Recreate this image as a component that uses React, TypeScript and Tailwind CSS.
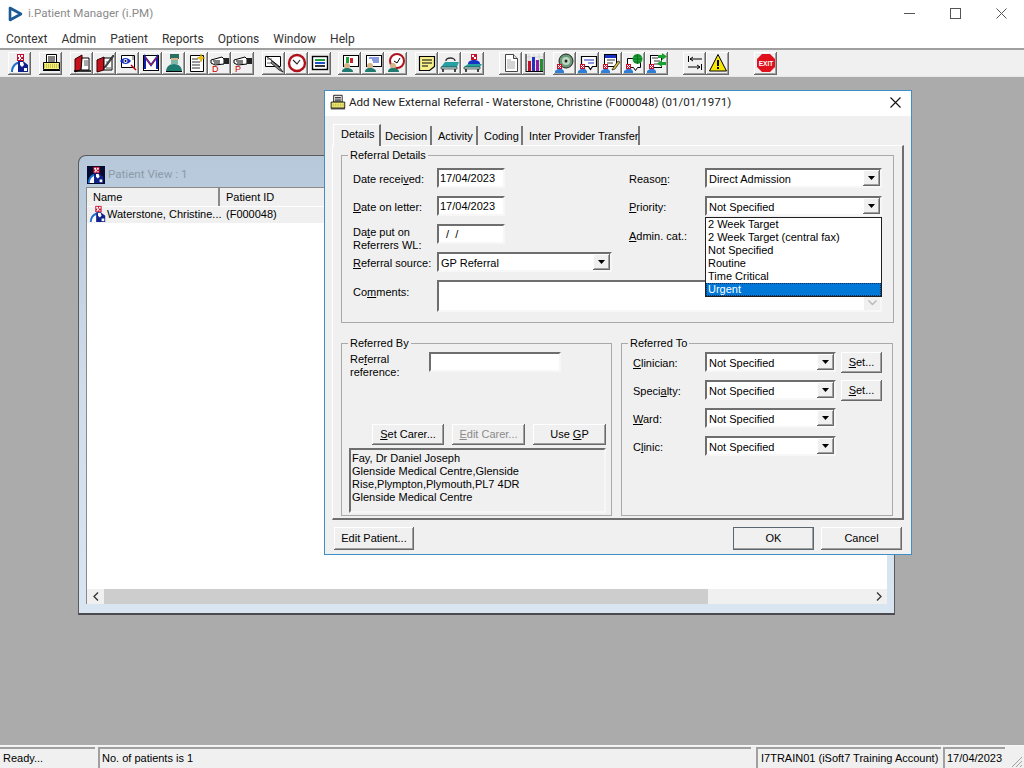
import React from "react";

const ui = "font-['Liberation_Sans',Arial,sans-serif] text-[11px] text-black";
const seg = "font-['Roboto',sans-serif] text-[11.6px]";
const menu = "font-['Roboto',sans-serif] text-[12px]";
const raised = "bg-[#f0f0f0] shadow-[inset_-1px_-1px_0_#696969,inset_1px_1px_0_#ffffff,inset_-2px_-2px_0_#a0a0a0]";
const sunken = "border-2 border-t-[#6e6e6e] border-l-[#6e6e6e] border-b-[#f7f7f7] border-r-[#f7f7f7]";

function Overlay() {
  return (
    <g>
      <rect x="2" y="11" width="5" height="5" fill="#c8102e" />
      <rect x="3" y="12" width="1" height="1" fill="#fff" />
      <rect x="5" y="12" width="1" height="1" fill="#fff" />
      <rect x="4" y="13" width="1" height="1" fill="#fff" />
      <rect x="3" y="14" width="1" height="1" fill="#fff" />
      <rect x="5" y="14" width="1" height="1" fill="#fff" />
      <path d="M0 20v-2l3-2h4l2 2v2z" fill="#2f7fd6" />
    </g>
  );
}

function DoctorPaths() {
  return (
    <g>
      <rect x="7" y="1" width="7" height="7" fill="#c8102e" />
      <rect x="8" y="2" width="2" height="2" fill="#fff" />
      <rect x="11" y="2" width="2" height="2" fill="#fff" />
      <rect x="9" y="4" width="2" height="2" fill="#fff" />
      <rect x="8" y="6" width="2" height="1" fill="#fff" />
      <rect x="11" y="6" width="2" height="1" fill="#fff" />
      <path d="M1 19c0-5 2-8 6-10h1v10z" fill="#1e6fd0" />
      <path d="M3 19c0-4 2-7 5-8v8z" fill="#fff" />
      <path d="M8 8h5l5 4v7H8z" fill="#10228a" />
      <path d="M10 9h3l1 3-2 2-2-2z" fill="#fff" />
      <rect x="14" y="15" width="3" height="3" fill="#fff" />
    </g>
  );
}

const icons: Record<string, React.ReactNode> = {
  doctor: <DoctorPaths />,
  printer: (
    <g>
      <path d="M5.5 1.5h10v8h-10z" fill="#fff" stroke="#000" />
      <path d="M7 4h7M7 6h7M7 8h7" stroke="#000" />
      <path d="M2.5 9.5h16v7h-16z" fill="#f4ee7a" stroke="#000" />
      <path d="M3 12h15M3 14h15" stroke="#9a9420" strokeDasharray="1 1" />
      <path d="M2 17.5h17" stroke="#000" />
    </g>
  ),
  redbook: (
    <g>
      <path d="M3 6l7-4v14l-7 3z" fill="#c8101c" stroke="#300" />
      <path d="M10 5h7v12H9z" fill="#fff" stroke="#000" />
      <path d="M12 8h4M12 10h4M12 12h4" stroke="#555" />
      <path d="M2 18h17" stroke="#000" strokeWidth="1.5" />
    </g>
  ),
  bookpen: (
    <g>
      <path d="M2 7l7-3v13l-7 2z" fill="#c8101c" stroke="#300" />
      <path d="M9 5h8v12H9z" fill="#fff" stroke="#000" />
      <path d="M10 13L18 2l1 1-8 11-2 1z" fill="#555" stroke="#000" strokeWidth=".6" />
      <path d="M11 9h3M11 15h5" stroke="#555" />
    </g>
  ),
  eyedoc: (
    <g>
      <path d="M3.5 2.5h13v12h-13z" fill="#fff" stroke="#000" />
      <path d="M2 8c3-4 8-4 11 0-3 4-8 4-11 0z" fill="#1532c4" />
      <circle cx="7.5" cy="8" r="2" fill="#fff" />
      <circle cx="7.5" cy="8" r="1" fill="#000" />
      <path d="M13 12l5 5" stroke="#c00" strokeWidth="1.5" />
      <path d="M14 4h2M14 6h2" stroke="#555" />
    </g>
  ),
  mail: (
    <g>
      <rect x="2.5" y="2.5" width="15" height="15" fill="#fff" stroke="#000" />
      <path d="M4 16V4l6 8 6-8v12" fill="none" stroke="#1222b0" strokeWidth="2" />
      <path d="M4 4l6 8 6-8" fill="none" stroke="#d0102a" />
    </g>
  ),
  surgeon: (
    <g>
      <rect x="6" y="1" width="9" height="5" fill="#2b6f62" />
      <rect x="7" y="5" width="7" height="4" fill="#d8b48a" />
      <rect x="7" y="7" width="7" height="4" fill="#7fb8a8" />
      <path d="M2 19c0-5 3-8 8-8s8 3 8 8z" fill="#1f7a70" />
      <rect x="2" y="18" width="16" height="1" fill="#000" />
    </g>
  ),
  star: (
    <g>
      <path d="M3.5 2.5h13v16h-13z" fill="#fff" stroke="#000" />
      <path d="M5 6h6M5 9h8M5 12h8M5 15h8" stroke="#333" />
      <path d="M14 1l1 3 3 1-3 1-1 3-1-3-3-1 3-1z" fill="#f5c400" stroke="#b88f00" strokeWidth=".5" />
    </g>
  ),
  camD: (
    <g>
      <path d="M1 7l11-3 2 2v5l-9 1-4-2z" fill="#fff" stroke="#000" />
      <rect x="14" y="5" width="5" height="6" fill="#222" />
      <path d="M3 8h7M4 10h6" stroke="#000" />
    </g>
  ),
  pencilDoc: (
    <g>
      <path d="M1.5 3.5h15v10h-15z" fill="#fff" stroke="#000" />
      <path d="M2 3l14 11" stroke="#000" />
      <path d="M8 8l8 7 3 4-4-2-8-7z" fill="#888" stroke="#000" strokeWidth=".7" />
      <path d="M3 6h5M3 10h4" stroke="#666" />
    </g>
  ),
  clock: (
    <g>
      <circle cx="10" cy="10" r="8" fill="#fff" stroke="#b0121c" strokeWidth="2.4" />
      <path d="M6 7l4 4 3-4" fill="none" stroke="#222" strokeWidth="1.1" />
    </g>
  ),
  list: (
    <g>
      <rect x="2.5" y="3.5" width="15" height="13" fill="#fff" stroke="#000" strokeWidth="1.4" />
      <rect x="5" y="6" width="10" height="2" fill="#20a040" />
      <rect x="5" y="9" width="10" height="2" fill="#2050d0" />
      <rect x="5" y="12" width="10" height="2" fill="#333" />
    </g>
  ),
  screenA: (
    <g>
      <rect x="3.5" y="2.5" width="15" height="11" fill="#fff" stroke="#000" />
      <rect x="6" y="4" width="3" height="6" fill="#20a040" />
      <rect x="10" y="5" width="3" height="5" fill="#d02030" />
      <circle cx="7" cy="13" r="3" fill="#d8b48a" />
      <path d="M2 19c0-3 2-4 5-4s6 1 6 4z" fill="#1f7a70" />
    </g>
  ),
  screenB: (
    <g>
      <rect x="3.5" y="2.5" width="15" height="11" fill="#fff" stroke="#000" />
      <path d="M6 5h10M9 7h7M10 9h6" stroke="#1532c4" />
      <circle cx="7" cy="13" r="3" fill="#d8b48a" />
      <path d="M2 19c0-3 2-4 5-4s6 1 6 4z" fill="#1f7a70" />
    </g>
  ),
  screenC: (
    <g>
      <circle cx="11" cy="8" r="7" fill="#fff" stroke="#b0121c" strokeWidth="2" />
      <path d="M8 8l3 2 3-5" fill="none" stroke="#000" />
      <circle cx="7" cy="13" r="3" fill="#d8b48a" />
      <path d="M2 19c0-3 2-4 5-4s6 1 6 4z" fill="#1f7a70" />
    </g>
  ),
  note: (
    <g>
      <path d="M2.5 3.5h15v10l-5 4h-10z" fill="#f7f08a" stroke="#000" strokeWidth="1.2" />
      <path d="M5 7h10M5 10h10M5 13h6" stroke="#000" />
    </g>
  ),
  bed: (
    <g>
      <path d="M6 8c0-4 9-4 9 0" fill="none" stroke="#333" strokeWidth="1.4" />
      <path d="M1 14l4-5h14l-2 5z" fill="#26a0a0" />
      <path d="M1 14h16v2H1z" fill="#b8dcdc" stroke="#222" strokeWidth=".6" />
      <path d="M3 16v3M15 16v3" stroke="#000" strokeWidth="1.4" />
    </g>
  ),
  bedPerson: (
    <g>
      <rect x="8" y="1" width="6" height="6" fill="#c8102e" />
      <rect x="9" y="2" width="2" height="2" fill="#fff" />
      <rect x="11" y="4" width="2" height="2" fill="#fff" />
      <path d="M5 11c0-3 3-4 6-4s6 1 6 4z" fill="#1532c4" />
      <path d="M1 14l4-3h14l-2 3z" fill="#26a0a0" />
      <path d="M1 14h16v2H1z" fill="#b8dcdc" stroke="#222" strokeWidth=".6" />
      <path d="M3 16v3M15 16v3" stroke="#000" strokeWidth="1.4" />
    </g>
  ),
  page: (
    <g>
      <path d="M4.5 1.5h8l4 4v13h-12z" fill="#fff" stroke="#444" />
      <path d="M12.5 1.5v4h4" fill="#ddd" stroke="#444" />
      <path d="M6 7h4M6 9h8M6 11h8M6 13h8M6 15h8" stroke="#aaa" />
    </g>
  ),
  chart: (
    <g>
      <path d="M2 4h17M2 8h17M2 12h17M2 16h17M5 1v18M10 1v18M15 1v18" stroke="#c8c8c8" strokeWidth=".7" />
      <rect x="4" y="8" width="3" height="10" fill="#c01030" />
      <rect x="8" y="4" width="3" height="14" fill="#2030c0" />
      <rect x="12" y="7" width="3" height="11" fill="#9020a0" />
      <rect x="16" y="6" width="3" height="12" fill="#209030" />
      <path d="M2 18.5h17M2 1v18" stroke="#000" />
    </g>
  ),
  disc: (
    <g>
      <circle cx="11" cy="8" r="7" fill="#6a9a78" stroke="#222" />
      <circle cx="11" cy="8" r="4" fill="#bcd8c0" />
      <circle cx="11" cy="8" r="1.5" fill="#222" />
      <Overlay />
    </g>
  ),
  formA: (
    <g>
      <path d="M3.5 3.5h15v10l-4 0-2 3-2-3h-7z" fill="#fff" stroke="#000" strokeWidth="1.2" />
      <path d="M6 7h10M10 10h6" stroke="#1532c4" />
      <Overlay />
    </g>
  ),
  formB: (
    <g>
      <rect x="3.5" y="1.5" width="12" height="12" fill="#fff" stroke="#000" />
      <rect x="4" y="2" width="11" height="3" fill="#1532c4" />
      <path d="M6 7h8M6 10h6" stroke="#333" />
      <path d="M11 17l3-1 5-7-2-1-5 7z" fill="#d8c040" stroke="#000" strokeWidth=".6" />
      <Overlay />
    </g>
  ),
  formGlobe: (
    <g>
      <path d="M3.5 5.5h13v9h-3l-2 3-2-3h-6z" fill="#fff" stroke="#000" />
      <circle cx="13.5" cy="6" r="5" fill="#18a030" />
      <path d="M9 6h9M13.5 1v10M10 3h7M10 9h7" stroke="#0a5a18" strokeWidth=".6" />
      <Overlay />
    </g>
  ),
  formArrows: (
    <g>
      <rect x="3.5" y="2.5" width="11" height="12" fill="#fff" stroke="#000" />
      <path d="M5 5h6M7 8h6M7 11h6" stroke="#333" />
      <path d="M11 2h4V0l5 3.5L15 7V5h-4z" fill="#18a030" />
      <path d="M19 9h-4V7l-5 3.5 5 3.5v-2h4z" fill="#18a030" />
      <Overlay />
    </g>
  ),
  swap: (
    <g>
      <path d="M3.5 3v6M5 6h12M5 6l3-2M5 6l3 2" fill="none" stroke="#000" />
      <path d="M16.5 11v6M3 14h12M15 14l-3-2M15 14l-3 2" fill="none" stroke="#000" />
    </g>
  ),
  warn: (
    <g>
      <path d="M10 1.5l8.5 16.5h-17z" fill="#f7e600" stroke="#000" />
      <rect x="9" y="7" width="2" height="6" fill="#000" />
      <rect x="9" y="14" width="2" height="2" fill="#000" />
    </g>
  ),
};

function Cam({ letter }: { letter: string }) {
  return (
    <svg width="20" height="20" viewBox="0 0 20 20">
      {icons.camD}
      <text x="2" y="19" fontSize="9" fill="#c00" fontFamily="Liberation Sans">{letter}</text>
    </svg>
  );
}

function Ico({ n, size = 20 }: { n: string; size?: number }) {
  return (
    <svg width={size} height={size} viewBox="0 0 20 20" className="shrink-0">
      {icons[n]}
    </svg>
  );
}

function Tool({ children }: { children: React.ReactNode }) {
  return (
    <div className={`${raised} w-[23px] h-[23px] flex items-center justify-center`}>
      {children}
    </div>
  );
}

const groups: [string[], string][] = [
  [["doctor"], ""],
  [["printer"], "ml-[8px]"],
  [["redbook", "bookpen", "eyedoc", "mail", "surgeon", "star", "camD", "camP"], "ml-[8px]"],
  [["pencilDoc", "clock", "list"], "ml-[8px]"],
  [["screenA", "screenB", "screenC"], "ml-[7px]"],
  [["note", "bed", "bedPerson"], "ml-[8px]"],
  [["page", "chart"], "ml-[15px]"],
  [["disc", "formA", "formB", "formGlobe", "formArrows"], "ml-[8px]"],
  [["swap", "warn"], "ml-[15px]"],
];

function Toolbar() {
  return (
    <div className="h-[29px] bg-[#f0f0f0] border-t-2 border-t-[#a0a0a0] border-b border-b-[#e8e8e8] flex items-center pl-[8px] shrink-0">
      {groups.map(([items, ml], i) => (
        <div key={i} className={`flex ${ml}`}>
          {items.map((n) => (
            <Tool key={n}>
              {n === "camD" ? <Cam letter="D" /> : n === "camP" ? <Cam letter="P" /> : <Ico n={n} />}
            </Tool>
          ))}
        </div>
      ))}
      <div className="ml-[25px]">
        <Tool>
          <svg width="20" height="20" viewBox="0 0 20 20">
            <path d="M6 1h8l5 5v8l-5 5H6l-5-5V6z" fill="#e0101c" />
            <text x="10" y="12.5" textAnchor="middle" fontSize="6.5" fontWeight="700" fill="#fff" fontFamily="Liberation Sans">EXIT</text>
          </svg>
        </Tool>
      </div>
    </div>
  );
}

function Arrow() {
  return (
    <svg width="7" height="4" viewBox="0 0 7 4"><path d="M0 0h7L3.5 4z" fill="#000" /></svg>
  );
}

function Combo({ value, w = "w-[177px]", children }: { value: string; w?: string; children?: React.ReactNode }) {
  return (
    <div className={`relative ${w} h-[20px] bg-white ${sunken} flex items-center justify-between pl-[2px]`}>
      <span className="relative top-[1px] leading-none whitespace-nowrap">{value}</span>
      <div className={`${raised} w-[17px] h-[16px] flex items-center justify-center`}>
        <Arrow />
      </div>
      {children}
    </div>
  );
}

function Input({ value, w }: { value: string; w: string }) {
  return (
    <div className={`${w} h-[20px] bg-white ${sunken} flex items-center pl-[1px] whitespace-pre leading-none`}>{value}</div>
  );
}

function Btn({ children, w, h = "h-[21px]", disabled = false, className = "" }: { children: React.ReactNode; w: string; h?: string; disabled?: boolean; className?: string }) {
  return (
    <div className={`${raised} ${w} ${h} flex items-center justify-center whitespace-nowrap ${disabled ? "text-[#8a8a8a]" : ""} ${className}`}>
      {children}
    </div>
  );
}

function Group({ title, className, children }: { title: string; className: string; children: React.ReactNode }) {
  return (
    <fieldset className={`border border-[#a9a9a9] ${className}`}>
      <legend className="ml-[6px] px-[2px] h-[14px] leading-[14px] whitespace-nowrap">{title}</legend>
      {children}
    </fieldset>
  );
}

function Row({ label, w, children }: { label: React.ReactNode; w: string; children: React.ReactNode }) {
  return (
    <div className="flex items-center h-[20px]">
      <div className={`${w} shrink-0 whitespace-nowrap pt-[2px]`}>{label}</div>
      {children}
    </div>
  );
}

function Dropdown() {
  const opts = ["2 Week Target", "2 Week Target (central fax)", "Not Specified", "Routine", "Time Critical"];
  return (
    <div className="absolute left-[-2px] top-[19px] w-[177px] h-[80px] bg-white border border-[#1f1f1f] z-10">
      {opts.map((o) => (
        <div key={o} className="h-[13px] leading-[13px] pl-[2px] whitespace-nowrap">{o}</div>
      ))}
      <div className="h-[13px] leading-[11px] pl-[1px] bg-[#0078d7] text-white border border-dotted border-[#0a2a50]">Urgent</div>
    </div>
  );
}

function Dialog() {
  return (
    <div className="absolute left-[324px] top-[90px] w-[588px] h-[465px] bg-[#f0f0f0] border border-[#3f8fc6] flex flex-col z-20">
      <div className="h-[25px] bg-white flex items-center pl-[4px] pb-[2px] shrink-0">
        <Ico n="printer" size={17} />
        <span className={`${seg} ml-[3px] text-[#222] whitespace-nowrap`}>Add New External Referral - Waterstone, Christine (F000048) (01/01/1971)</span>
        <svg width="11" height="11" viewBox="0 0 11 11" className="ml-auto mr-[10px]">
          <path d="M.5.5l10 10M10.5.5l-10 10" stroke="#111" strokeWidth="1.1" />
        </svg>
      </div>

      <div className="flex items-end h-[29px] pl-[8px] shrink-0">
        <div className="w-[48px] h-[22px] bg-[#f0f0f0] border-l border-t border-white border-r-2 border-r-[#6e6e6e] pl-[7px] pt-[1px] relative top-[1px] z-10">Details</div>
        <div className="w-[51px] h-[19px] border-r-2 border-r-[#777] pl-[4px] pt-[2px]">Decision</div>
        <div className="w-[46px] h-[19px] border-r-2 border-r-[#777] pl-[6px] pt-[2px]">Activity</div>
        <div className="w-[45px] h-[19px] border-r-2 border-r-[#777] pl-[6px] pt-[2px]">Coding</div>
        <div className="w-[117px] h-[19px] border-r-2 border-r-[#777] pl-[6px] pt-[2px] whitespace-nowrap">Inter Provider Transfer</div>
      </div>

      <div className="mx-[7px] h-[375px] border-t border-l border-t-white border-l-white border-r-2 border-b-2 border-r-[#6e6e6e] border-b-[#6e6e6e] px-[8px] pt-[2px] shrink-0">
        <Group title="Referral Details" className="h-[175px]">
          <div className="flex pt-[6px] pl-[11px]">
            <div className="w-[259px] flex flex-col gap-[8px]">
              <Row label={<>Date recei<u>v</u>ed:</>} w="w-[84px]"><Input value="17/04/2023" w="w-[68px]" /></Row>
              <Row label={<><u>D</u>ate on letter:</>} w="w-[84px]"><Input value="17/04/2023" w="w-[68px]" /></Row>
              <Row label={<div className="leading-[13px] mt-[8px]">Da<u>t</u>e put on<br />Referrers WL:</div>} w="w-[84px]"><Input value="  /  /" w="w-[68px]" /></Row>
              <Row label={<><u>R</u>eferral source:</>} w="w-[84px]"><Combo value="GP Referral" w="w-[175px]" /></Row>
            </div>
            <div className="ml-[17px] flex flex-col gap-[8px]">
              <Row label={<>Reaso<u>n</u>:</>} w="w-[76px]"><Combo value="Direct Admission" /></Row>
              <Row label={<><u>P</u>riority:</>} w="w-[76px]">
                <Combo value="Not Specified"><Dropdown /></Combo>
              </Row>
              <Row label={<span className="relative top-[1px]"><u>A</u>dmin. cat.:</span>} w="w-[76px]"><Combo value="" /></Row>
            </div>
          </div>
          <div className="flex mt-[8px] pl-[11px]">
            <div className="w-[84px] pt-[4px]">Co<u>m</u>ments:</div>
            <div className={`w-[445px] h-[32px] bg-white ${sunken} flex justify-end`}>
              <div className="w-[16px] bg-[#f0f0f0] flex items-end justify-center pb-[4px]">
                <svg width="9" height="6" viewBox="0 0 9 6"><path d="M.5.5l4 4 4-4" fill="none" stroke="#b8b8b8" strokeWidth="1.4" /></svg>
              </div>
            </div>
          </div>
        </Group>

        <div className="flex gap-[9px] mt-[13px]">
          <Group title="Referred By" className="w-[271px] h-[180px]">
            <div className="pl-[7px] pr-[5px] pt-[2px]">
              <div className="flex h-[20px]">
                <div className="w-[80px] pl-[1px] pt-[1px] leading-[13px]">Re<u>f</u>erral<br />reference:</div>
                <Input value="" w="w-[132px]" />
              </div>
              <div className="flex justify-end gap-[8px] mt-[52px]">
                <Btn w="w-[72px]"><span><u>S</u>et Carer...</span></Btn>
                <Btn w="w-[73px]" disabled><span><u>E</u>dit Carer...</span></Btn>
                <Btn w="w-[73px]"><span>Use <u>G</u>P</span></Btn>
              </div>
              <div className={`mt-[3px] h-[65px] ${sunken} pl-[1px] pt-[2px] leading-[13px]`}>
                Fay, Dr Daniel Joseph<br />Glenside Medical Centre,Glenside<br />Rise,Plympton,Plymouth,PL7 4DR<br />Glenside Medical Centre
              </div>
            </div>
          </Group>
          <Group title="Referred To" className="w-[272px] h-[180px]">
            <div className="pl-[11px] pt-[2px] flex flex-col gap-[8px]">
              <Row label={<><u>C</u>linician:</>} w="w-[72px]">
                <Combo value="Not Specified" w="w-[131px]" />
                <Btn w="w-[41px]" className="ml-[5px]"><span><u>S</u>et...</span></Btn>
              </Row>
              <Row label={<>Speci<u>a</u>lty:</>} w="w-[72px]">
                <Combo value="Not Specified" w="w-[131px]" />
                <Btn w="w-[41px]" className="ml-[5px]"><span><u>S</u>et...</span></Btn>
              </Row>
              <Row label={<><u>W</u>ard:</>} w="w-[72px]"><Combo value="Not Specified" w="w-[131px]" /></Row>
              <Row label={<>C<u>l</u>inic:</>} w="w-[72px]"><Combo value="Not Specified" w="w-[131px]" /></Row>
            </div>
          </Group>
        </div>
      </div>

      <div className="flex items-center pl-[9px] pr-[9px] mt-[7px]">
        <Btn w="w-[80px]" h="h-[23px]">Edit Patient...</Btn>
        <Btn w="w-[81px]" h="h-[23px]" className="ml-auto outline outline-1 outline-[#5a6670] outline-offset-[-1px]">OK</Btn>
        <Btn w="w-[81px]" h="h-[23px]" className="ml-[7px]">Cancel</Btn>
      </div>
    </div>
  );
}

function PatientView() {
  return (
    <div className="absolute left-[78px] top-[155px] w-[817px] h-[460px] rounded-tl-[8px] border-t border-l border-b-2 border-r border-t-[#5a5a5a] border-l-[#5a5a5a] border-b-[#4a4a50] border-r-[#5a5a5a] bg-gradient-to-b from-[#b6c8da] via-[#cfdcea] to-[#d9e6f2] flex flex-col z-10">
      <div className="h-[31px] flex items-center pl-[8px] pt-[6px] shrink-0">
        <svg width="18" height="18" viewBox="0 0 20 20" className="shrink-0">
          <rect width="20" height="20" fill="#050a30" />
          <DoctorPaths />
        </svg>
        <span className={`${seg} ml-[3px] text-[#8b9aa8]`}>Patient View : 1</span>
      </div>
      <div className="mx-[7px] flex-1 bg-white border-t border-l border-[#8a8a8a] border-r-[#f0f0f0] flex flex-col min-h-0">
        <div className="flex h-[18px] bg-[#f0f0f0] shrink-0">
          <div className="w-[133px] pl-[6px] border-r-2 border-r-[#8a8a8a] leading-[19px]">Name</div>
          <div className="flex-1 pl-[6px] leading-[19px]">Patient ID</div>
        </div>
        <div className="flex h-[17px] bg-[#f0f0f0] items-center shrink-0 border-t border-t-white pb-[2px]">
          <div className="w-[133px] flex items-center pl-[2px]">
            <Ico n="doctor" size={18} />
            <span className="whitespace-nowrap">Waterstone, Christine...</span>
          </div>
          <div className="pl-[6px]">(F000048)</div>
        </div>
        <div className="flex-1" />
        <div className="h-[15px] bg-[#f0f0f0] flex items-stretch shrink-0">
          <div className="w-[17px] flex items-center justify-center">
            <svg width="6" height="9" viewBox="0 0 6 9"><path d="M5 .5l-4 4 4 4" fill="none" stroke="#333" strokeWidth="1.3" /></svg>
          </div>
          <div className="w-[604px] bg-[#cdcdcd]" />
          <div className="ml-auto w-[17px] flex items-center justify-center">
            <svg width="6" height="9" viewBox="0 0 6 9"><path d="M1 .5l4 4-4 4" fill="none" stroke="#333" strokeWidth="1.3" /></svg>
          </div>
        </div>
      </div>
      <div className="h-[9px] shrink-0" />
    </div>
  );
}

function Status() {
  const cell = "h-[21px] border-t-2 border-l-2 border-t-[#a0a0a0] border-l-[#a0a0a0] pl-[2px] leading-[18px] whitespace-nowrap";
  return (
    <div className="relative h-[23px] bg-[#f0f0f0] border-t border-t-[#f6f6f6] flex items-end shrink-0">
      <div className={`w-[95px] ${cell} !border-l-0 pl-[3px]`}>Ready...</div>
      <div className={`w-[653px] ml-[3px] ${cell}`}>No. of patients is 1</div>
      <div className={`w-[185px] ml-[5px] ${cell} pl-[3px]`}>I7TRAIN01 (iSoft7 Training Account)</div>
      <div className={`w-[62px] ml-[2px] ${cell}`}>17/04/2023</div>
      <svg width="12" height="12" viewBox="0 0 12 12" className="absolute right-[1px] bottom-0">
        <path d="M11 1L1 11M11 5l-6 6M11 9l-2 2" stroke="#a0a0a0" />
      </svg>
    </div>
  );
}

export default function App() {
  return (
    <div className={`${ui} relative w-[1024px] h-[768px] overflow-hidden bg-[#ababab] flex flex-col`}>
      <div className="h-[29px] bg-white flex items-center pb-[2px] shrink-0">
        <svg width="16" height="16" viewBox="0 0 16 16" className="ml-[8px]">
          <path d="M2 2l11 6-11 6z" fill="none" stroke="#1c5a96" strokeWidth="2.6" strokeLinejoin="round" />
        </svg>
        <span className={`${seg} ml-[4px] text-[#8a8a8a]`}>i.Patient Manager (i.PM)</span>
        <svg width="11" height="11" viewBox="0 0 11 11" className="ml-auto"><path d="M0 5.5h11" stroke="#555" /></svg>
        <svg width="11" height="11" viewBox="0 0 11 11" className="ml-[35px]"><rect x=".5" y=".5" width="10" height="10" fill="none" stroke="#555" /></svg>
        <svg width="11" height="11" viewBox="0 0 11 11" className="ml-[35px] mr-[17px]"><path d="M.5.5l10 10M10.5.5l-10 10" stroke="#555" /></svg>
      </div>
      <div className={`${menu} h-[19px] bg-white flex items-center pl-[6px] gap-[14px] text-[#333] shrink-0`}>
        <span>Context</span><span>Admin</span><span>Patient</span><span>Reports</span><span>Options</span><span>Window</span><span>Help</span>
      </div>
      <Toolbar />
      <div className="flex-1 relative" />
      <Status />
      <PatientView />
      <Dialog />
    </div>
  );
}
